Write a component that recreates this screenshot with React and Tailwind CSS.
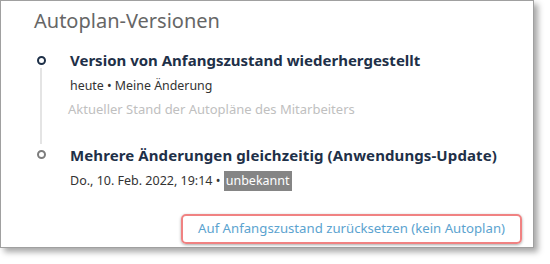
export default function App() {
  return (
    <div className="w-[550px] h-[264px] bg-white" style={{ fontFamily: '"Noto Sans", "Open Sans", sans-serif' }}>
      <div className="w-[534px] h-[248px] border border-[#a0a0a0] bg-white shadow-[4px_4px_6px_rgba(0,0,0,0.35)] flex flex-col">
        {/* Kopf */}
        <h1 className="pl-[33px] pt-[6px] text-[20px] leading-[28px] text-[#666666]">Autoplan-Versionen</h1>

        {/* Verlauf */}
        <div className="mt-[14px] pl-[35px] pr-4">
          <div className="flex">
            <div className="w-[10px] flex flex-col items-center">
              <div className="mt-[7px] w-[9px] h-[9px] rounded-full border-[2.5px] border-[#1e3048]" />
              <div className="w-[2px] flex-1 bg-[#e4e4e4] mt-[3px]" />
            </div>
            <div className="pl-[24px] pb-[25px]">
              <div className="text-[15px] leading-[22px] font-bold text-[#1e3048]">Version von Anfangszustand wiederhergestellt</div>
              <div className="mt-[5px] text-[12.4px] leading-[20px] text-[#333333]">heute • Meine Änderung</div>
              <div className="mt-[3px] -ml-[2px] text-[13px] leading-[20px] text-[#c0c0c0]">Aktueller Stand der Autopläne des Mitarbeiters</div>
            </div>
          </div>
          <div className="flex">
            <div className="w-[10px] flex flex-col items-center">
              <div className="mt-[6px] w-[9px] h-[9px] rounded-full border-[2.5px] border-[#7d7d7d]" />
            </div>
            <div className="pl-[24px]">
              <div className="text-[15px] leading-[22px] font-bold text-[#1e3048] tracking-[0.1px]">Mehrere Änderungen gleichzeitig (Anwendungs-Update)</div>
              <div className="mt-[5px] text-[12.5px] leading-[20px] text-[#333333] flex items-center">
                <span>Do., 10. Feb. 2022, 19:14 •&nbsp;</span>
                <span className="bg-[#858585] text-white px-[2px]">unbekannt</span>
              </div>
            </div>
          </div>
        </div>

        {/* Aktion */}
        <div className="mt-auto mb-[3px] flex justify-end pr-[11px]">
          <button className="h-[30px] px-[15px] rounded-[5px] border-2 border-[#f08282] shadow-[0_1px_3px_rgba(0,0,0,0.35)] text-[13.2px] text-[#5ba3cf]">
            Auf Anfangszustand zurücksetzen (kein Autoplan)
          </button>
        </div>
      </div>
    </div>
  );
}
